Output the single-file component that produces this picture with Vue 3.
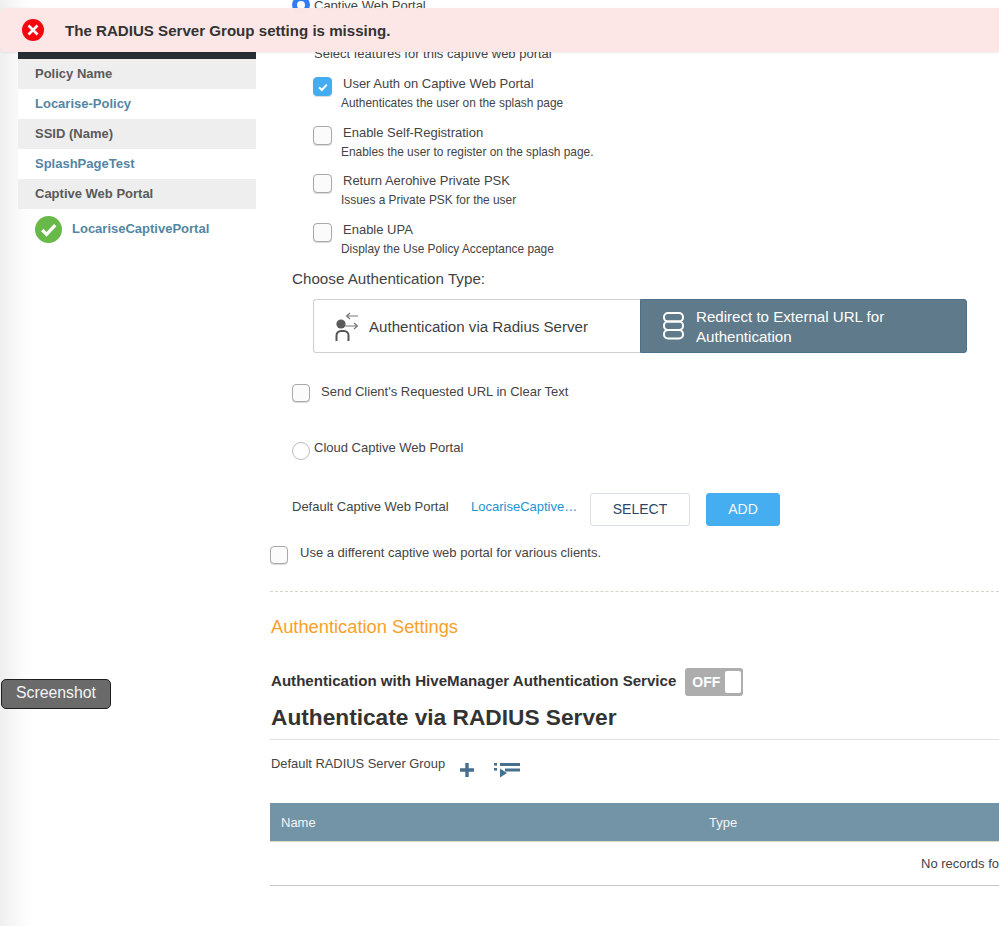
<script setup>
const summary = [
  { head: 'Policy Name', value: 'Locarise-Policy' },
  { head: 'SSID (Name)', value: 'SplashPageTest' },
]
const features = [
  { label: 'User Auth on Captive Web Portal', sub: 'Authenticates the user on the splash page', on: true },
  { label: 'Enable Self-Registration', sub: 'Enables the user to register on the splash page.', on: false },
  { label: 'Return Aerohive Private PSK', sub: 'Issues a Private PSK for the user', on: false },
  { label: 'Enable UPA', sub: 'Display the Use Policy Acceptance page', on: false },
]
</script>

<template>
  <div class="page">
    <aside class="side">
      <div class="side-top"></div>
      <template v-for="s in summary" :key="s.head">
        <div class="side-head">{{ s.head }}</div>
        <div class="side-val">{{ s.value }}</div>
      </template>
      <div class="side-head">Captive Web Portal</div>
      <div class="side-portal">
        <svg class="ok" viewBox="0 0 28 28" width="28" height="28">
          <circle cx="14" cy="14" r="14" fill="#68b84a" />
          <path d="M7.5 14.5l4.5 4.5 9-9.5" fill="none" stroke="#fff" stroke-width="3.4" />
        </svg>
        <span class="portal-name">LocariseCaptivePortal</span>
      </div>
    </aside>

    <main class="main">
      <div class="portal-block">
        <div class="radio-line top-radio">
          <span class="radio on"></span>
          <span>Captive Web Portal</span>
        </div>
        <div class="select-note">Select features for this captive web portal</div>
        <div v-for="f in features" :key="f.label" class="feature">
          <div class="feature-top">
            <span class="box" :class="{ checked: f.on }">
              <svg v-if="f.on" viewBox="0 0 18 18" width="18" height="18">
                <path d="M5 9.3l2.8 2.7 5-5.4" fill="none" stroke="#fff" stroke-width="2" />
              </svg>
            </span>
            <span class="feature-label">{{ f.label }}</span>
          </div>
          <div class="feature-sub">{{ f.sub }}</div>
        </div>
      </div>

      <div class="choose">Choose Authentication Type:</div>
      <div class="segment">
        <div class="seg seg-left">
          <svg viewBox="0 0 26 32" width="26" height="32">
            <circle cx="7" cy="14" r="4.6" fill="#5b5b5b" />
            <path d="M2.5 31v-5.5a4.5 4.5 0 0 1 4.5-4.5h3a4.5 4.5 0 0 1 4.500 4.500V31" fill="none" stroke="#555" stroke-width="2" />
            <path d="M24 6h-11M16 3l-3.4 3 3.4 3M11 16h12M20 13l3.4 3-3.4 3" fill="none" stroke="#777" stroke-width="1.2" />
          </svg>
          <span>Authentication via Radius Server</span>
        </div>
        <div class="seg seg-right">
          <svg viewBox="0 0 24 30" width="24" height="30">
            <g fill="none" stroke="#fff" stroke-width="2">
              <rect x="2" y="2" width="19" height="8.5" rx="4" />
              <rect x="2" y="10.5" width="19" height="8.5" rx="4" />
              <rect x="2" y="19" width="19" height="8.5" rx="4" />
            </g>
          </svg>
          <span class="seg-text">Redirect to External URL for Authentication</span>
        </div>
      </div>

      <div class="check-line send">
        <span class="box"></span>
        <span>Send Client's Requested URL in Clear Text</span>
      </div>

      <div class="radio-line cloud">
        <span class="radio"></span>
        <span>Cloud Captive Web Portal</span>
      </div>

      <div class="default-row">
        <span class="default-label">Default Captive Web Portal</span>
        <a class="default-link">LocariseCaptivePortal</a>
        <button class="btn btn-select">SELECT</button>
        <button class="btn btn-add">ADD</button>
      </div>

      <div class="check-line different">
        <span class="box"></span>
        <span>Use a different captive web portal for various clients.</span>
      </div>

      <div class="dashed"></div>
      <h3 class="orange">Authentication Settings</h3>

      <div class="hive">
        <strong>Authentication with HiveManager Authentication Service</strong>
        <div class="toggle"><span>OFF</span><i></i></div>
      </div>

      <h2 class="radius-title">Authenticate via RADIUS Server</h2>

      <div class="group-row">
        <span>Default RADIUS Server Group</span>
        <svg class="plus" viewBox="0 0 16 16" width="16" height="16">
          <path d="M8 1v14M1 8h14" stroke="#47708f" stroke-width="3.4" fill="none" />
        </svg>
        <svg class="listic" viewBox="0 0 26 16" width="26" height="16">
          <g fill="#47708f">
            <rect x="0" y="1" width="3" height="2.6" />
            <rect x="0" y="6" width="3" height="2.6" />
            <rect x="6" y="1" width="20" height="3" />
            <rect x="11" y="6.5" width="15" height="3" />
            <path d="M6 6.5l7 4.5-7 4.5z" />
          </g>
        </svg>
      </div>

      <div class="table">
        <div class="thead">
          <span class="th-name">Name</span>
          <span>Type</span>
        </div>
        <div class="tbody"><span>No records found</span></div>
      </div>
    </main>

    <div class="alert">
      <svg viewBox="0 0 24 24" width="24" height="24">
        <circle cx="12" cy="12" r="11" fill="#f5060f" />
        <path d="M7.5 7.5l9 9M16.500 7.5l-9 9" stroke="#fff" stroke-width="2.600" fill="none" />
      </svg>
      <span>The RADIUS Server Group setting is missing.</span>
    </div>
    <button class="shot">Screenshot</button>
  </div>
</template>

<style>
html, body { margin: 0; padding: 0; background: #fff; }
</style>

<style scoped>
.page {
  position: relative;
  width: 999px;
  height: 926px;
  overflow: hidden;
  display: flex;
  font-family: "Liberation Sans", Arial, sans-serif;
  color: #444;
  background: linear-gradient(90deg, #efefef 0, #fbfbfb 22px, #fff 34px);
}
.side {
  width: 238px;
  margin-left: 18px;
  flex: none;
  padding-top: 52px;
  font-size: 13px;
  font-weight: 700;
}
.side-top { height: 7px; background: #262e33; }
.side-head {
  height: 30px;
  line-height: 30px;
  padding-left: 17px;
  background: #eeeeee;
  color: #5a5a5a;
}
.side-val {
  height: 30px;
  line-height: 30px;
  padding-left: 17px;
  background: #fff;
  color: #5585a4;
}
.side-portal {
  display: flex;
  align-items: center;
  gap: 10px;
  padding: 7px 0 0 17px;
  color: #5585a4;
}
.portal-name { position: relative; top: -1px; }
.ok { flex: none; width: 27px; height: 27px; }
.main {
  flex: 1;
  min-width: 0;
  margin-left: 14px;
  font-size: 13px;
}
.portal-block { padding-left: 22px; margin-top: -4px; }
.radio-line { display: flex; align-items: center; }
.top-radio { height: 18px; gap: 4px; }
.radio {
  width: 18px;
  height: 18px;
  box-sizing: border-box;
  border: 1px solid #bbb;
  border-radius: 50%;
  background: #fff;
  flex: none;
}
.radio.on { border: 5px solid #2f7cf6; }
.select-note { margin: 32px 0 0 22px; line-height: 16px; height: 16px; font-size: 13px; }
.feature { margin-left: 21px; height: 48.600px; }
.select-note + .feature { margin-top: 15px; }
.feature-top { display: flex; align-items: center; height: 19px; gap: 11px; }
.box {
  width: 19px;
  height: 19px;
  box-sizing: border-box;
  border: 1px solid #a9a9a9;
  border-radius: 4px;
  background: #fbfbfb;
  box-shadow: 0 1px 1px rgba(0, 0, 0, .15);
  flex: none;
  display: block;
}
.box.checked { background: #43adf0; border-color: #43adf0; }
.box svg { display: block; margin: 0; }
.feature-label { font-size: 13px; position: relative; top: -3px; }
.feature-sub { margin: -1px 0 0 28px; font-size: 11.9px; line-height: 16px; }
.choose {
  margin: -2px 0 0 22px;
  font-size: 15.2px;
  line-height: 20px;
}
.segment {
  margin: 10px 32px 0 43px;
  height: 54px;
  display: flex;
  font-size: 15.1px;
}
.seg { display: flex; align-items: center; box-sizing: border-box; }
.seg-left {
  width: 327px;
  flex: none;
  border: 1px solid #cfcfcf;
  border-right: 0;
  border-radius: 3px 0 0 3px;
  background: #fff;
  padding-left: 20px;
  gap: 9px;
  color: #3f3f3f;
}
.seg-right {
  flex: 1;
  background: #5f7a8a;
  border: 1px solid #4f6f88;
  border-radius: 0 3px 3px 0;
  color: #fff;
  padding: 0 40px 0 21px;
  gap: 10px;
  line-height: 20px;
}
.seg-text { width: 230px; position: relative; top: 1px; }
.check-line { display: flex; align-items: center; gap: 11px; }
.check-line .box { width: 18px; height: 18px; }
.send { margin: 31px 0 0 22px; height: 18px; }
.send span:last-child { position: relative; top: -2px; }
.cloud { margin: 40px 0 0 22px; height: 18px; gap: 4px; }
.cloud span:last-child { position: relative; top: -4px; }
.default-row {
  margin: 32px 0 0 22px;
  height: 34px;
  display: flex;
  align-items: center;
}
.default-label { width: 179px; flex: none; position: relative; top: -3px; }
.default-link {
  width: 108px;
  flex: none;
  overflow: hidden;
  white-space: nowrap;
  text-overflow: ellipsis;
  color: #1b95d4;
  position: relative;
  top: -3px;
}
.btn {
  height: 33px;
  box-sizing: border-box;
  border-radius: 3px;
  font-family: inherit;
  font-size: 14px;
  padding: 0;
}
.btn-select {
  width: 100px;
  margin-left: 11px;
  background: #fff;
  border: 1px solid #d8dde8;
  color: #2d4768;
}
.btn-add {
  width: 74px;
  margin-left: 16px;
  background: #45aef0;
  border: 1px solid #45aef0;
  color: #f3f9fe;
}
.different { margin-top: 20px; height: 18px; gap: 12px; }
.different span:last-child { position: relative; top: -3px; }
.dashed { margin-top: 27px; border-top: 1px dashed #d5d5cc; }
.orange {
  margin: 24px 0 0 1px;
  font-size: 18.3px;
  font-weight: 400;
  line-height: 22px;
  color: #f9a02a;
}
.hive {
  margin: 30px 0 0 1px;
  height: 28px;
  display: flex;
  align-items: center;
  gap: 9px;
  color: #333;
}
.hive strong { font-size: 15.1px; position: relative; top: -2px; }
.toggle {
  width: 58px;
  height: 28px;
  box-sizing: border-box;
  border-radius: 3px;
  background: #adadad;
  display: flex;
  align-items: center;
  justify-content: space-between;
  padding: 3px 2px 3px 7px;
  color: #fff;
  font-weight: 700;
  font-size: 14px;
}
.toggle i { display: block; width: 16px; height: 22px; background: #fff; border-radius: 2px; }
.radius-title {
  margin: 8px 0 0 1px;
  font-size: 22.7px;
  line-height: 27px;
  font-weight: 700;
  color: #333;
}
.group-row {
  margin-top: 8px;
  padding: 0 0 0 1px;
  border-top: 1px solid #e0e0e0;
  height: 64px;
  box-sizing: border-box;
  position: relative;
  display: flex;
  font-size: 12.9px;
}
.group-row > span { margin-top: 16px; line-height: 16px; height: 16px; }
.plus { margin: 22px 0 0 14px; }
.listic { margin: 22px 0 0 19px; }
.table { border-bottom: 1px solid #c8c4c4; }
.thead {
  height: 38px;
  background: #7393a7;
  border-bottom: 1px solid #d8d8c8;
  color: #f2f6f8;
  display: flex;
  align-items: center;
  padding-left: 11px;
}
.th-name { width: 428px; }
.tbody {
  height: 43px;
  display: flex;
  align-items: center;
  padding-left: 651px;
  white-space: nowrap;
  overflow: hidden;
}
.alert {
  position: absolute;
  left: 0;
  top: 8px;
  right: 0;
  height: 44px;
  border-radius: 6px 0 0 6px;
  background: rgba(253, 231, 230, .98);
  box-shadow: 0 1px 3px rgba(0, 0, 0, .08);
  display: flex;
  align-items: center;
  padding-left: 21px;
  gap: 20px;
  font-size: 15.1px;
  font-weight: 700;
  color: #333;
}
.shot {
  position: absolute;
  left: 1px;
  top: 679px;
  width: 110px;
  height: 30px;
  box-sizing: border-box;
  border: 1px solid #1f1f1f;
  border-radius: 5px;
  background: #6a6a6a;
  color: #f4f4f4;
  font-family: inherit;
  font-size: 15.8px;
  padding: 0 0 2px;
}
</style>
